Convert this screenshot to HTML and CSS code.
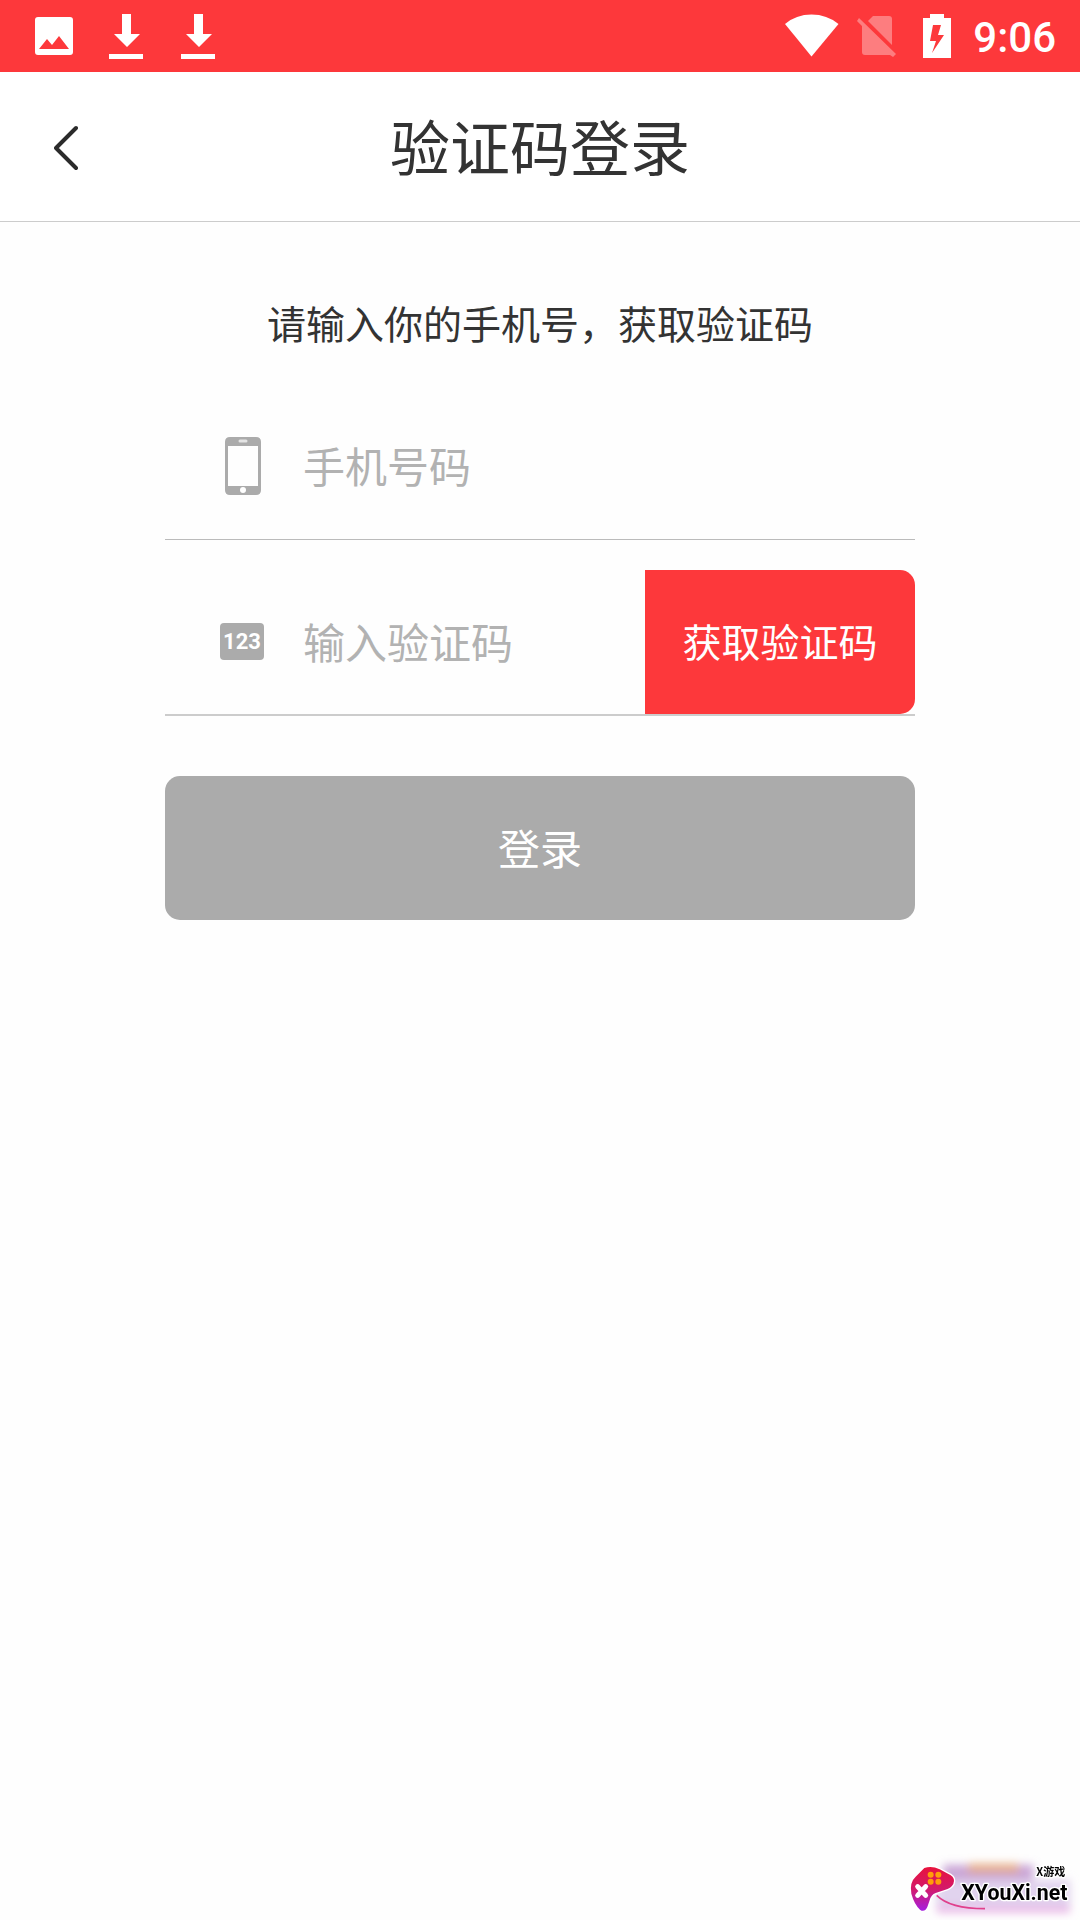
FILE: index.html
```html
<!DOCTYPE html>
<html lang="zh-CN">
<head>
    <meta charset="UTF-8">
    <meta name="viewport" content="width=device-width, initial-scale=1.0">
    <title>验证码登录</title>
    <link rel="stylesheet" href="styles.css">
</head>
<body>
    <div class="status-bar">
        <div class="status-left">
            <svg class="notice-icon" viewBox="0 0 48 72">
                <path fill="#fff" fill-rule="evenodd" d="M8 17h32a3 3 0 0 1 3 3v32a3 3 0 0 1-3 3H8a3 3 0 0 1-3-3V20a3 3 0 0 1 3-3zM9 49h30L29 36l-7 9-5-6z"/>
            </svg>
            <svg class="notice-icon" viewBox="0 0 48 72">
                <path fill="#fff" d="M20 14h9v20h9L25 47 12 34h8zM7 54h34v5H7z"/>
            </svg>
            <svg class="notice-icon" viewBox="0 0 48 72">
                <path fill="#fff" d="M20 14h9v20h9L25 47 12 34h8zM7 54h34v5H7z"/>
            </svg>
        </div>
        <div class="status-right">
            <svg class="system-icon" viewBox="0 0 62 72">
                <path fill="#fff" d="M29.500 56.500L3 24Q14 14.500 29.500 14.500T56.500 24z"/>
            </svg>
            <svg class="system-icon" viewBox="0 0 62 72">
                <g fill="#fff" opacity=".35">
                    <path d="M29 16h16q3 0 3 3v26L24 21z"/>
                    <path d="M15 18l37 36-3 3-3-2H21q-3 0-3-3V26l-5-5z"/>
                </g>
            </svg>
            <svg class="system-icon" viewBox="0 0 62 72">
                <path fill="#fff" fill-rule="evenodd" d="M24 14h14v4h7v40H17V18h7zM27 25l-3 16h6l-4 12 12-18h-6l3-10z"/>
            </svg>
            <span class="time">9:06</span>
        </div>
    </div>

    <header class="header">
        <button class="back" type="button" aria-label="返回">
            <svg width="24" height="46" viewBox="0 0 24 46">
                <path fill="none" stroke="#2b2b2b" stroke-width="4" stroke-linecap="round" stroke-linejoin="round" d="M22 3L2 23l20 20"/>
            </svg>
        </button>
        <h1 class="title">验证码登录</h1>
    </header>

    <main class="main">
        <form class="login-form">
            <p class="hint">请输入你的手机号，获取验证码</p>

            <div class="field">
                <label class="field-icon" for="phone" aria-label="手机号码">
                    <svg width="60" height="60" viewBox="0 0 60 60">
                        <path fill="#ababab" fill-rule="evenodd" d="M17 0h26q5 0 5 5v48q0 5-5 5H17q-5 0-5-5V5q0-5 5-5zM15 9v40h30V9z"/>
                        <path stroke="#e4e4e4" stroke-width="3" stroke-linecap="round" d="M27 4h6"/>
                        <circle cx="30" cy="53" r="3" fill="#fff"/>
                    </svg>
                </label>
                <input class="field-input" id="phone" type="tel" placeholder="手机号码">
            </div>

            <div class="field field-code">
                <label class="field-icon" for="code" aria-label="输入验证码">
                    <svg width="60" height="60" viewBox="0 0 60 60">
                        <rect x="7" y="11" width="44" height="37" rx="4" fill="#ababab"/>
                        <text class="digits" x="29" y="37" text-anchor="middle">123</text>
                    </svg>
                </label>
                <input class="field-input" id="code" type="text" placeholder="输入验证码">
                <button class="get-code" type="button">获取验证码</button>
            </div>

            <button class="submit" type="button">登录</button>
        </form>
    </main>

    <svg class="site-mark" width="190" height="70" viewBox="0 0 570 210">
        <defs>
            <filter id="soft" x="-30%" y="-60%" width="160%" height="220%">
                <feGaussianBlur stdDeviation="12"/>
            </filter>
            <linearGradient id="pad" x1="0" y1="0" x2="0" y2="1">
                <stop offset="0" stop-color="#e8123c"/>
                <stop offset=".5" stop-color="#d31a6a"/>
                <stop offset="1" stop-color="#a51fe0"/>
            </linearGradient>
        </defs>
        <g filter="url(#soft)">
            <path fill="#b98aca" opacity=".75" d="M160 44h270v50H160z"/>
            <path fill="#f0b070" opacity=".7" d="M235 40h150v28H235z"/>
            <path fill="#d9c8ea" opacity=".8" d="M140 90h400v80H140z"/>
            <path fill="#e39ade" opacity=".7" d="M140 168h400v20H140z"/>
        </g>
        <path fill="none" stroke="#e0408c" stroke-width="5" d="M140 136q40 40 145 40"/>
        <path fill="url(#pad)" stroke="#fff" stroke-width="8" paint-order="stroke" d="M103 54q22-8 46 4l32 17q16 10 9 27-7 13-26 18l-27 9q-14 5-18 22l-7 20q-9 18-22 8-17-16-26-48-6-34 13-51z"/>
        <g fill="#ff9d0a">
            <circle cx="122" cy="74" r="9"/>
            <circle cx="145" cy="74" r="9"/>
            <circle cx="122" cy="95" r="9"/>
            <circle cx="145" cy="95" r="9"/>
        </g>
        <path stroke="#fff" stroke-width="15" stroke-linecap="round" d="M83 110l24 26M107 110l-24 26"/>
        <text class="mark-small" x="439" y="78">X游戏</text>
        <text class="mark-name" x="214" y="150">XYouXi.net</text>
    </svg>
</body>
</html>
```

FILE: styles.css
```css
* {
    box-sizing: border-box;
}

body {
    margin: 0;
    min-height: 100vh;
    background-color: #fefefe;
    color: #333333;
    font-family: "Noto Sans CJK SC", sans-serif;
}

button,
input {
    font-family: inherit;
    border: none;
    padding: 0 0 4px;
}

button {
    cursor: pointer;
}

svg {
    display: block;
}

/* status bar */
.status-bar {
    display: flex;
    justify-content: space-between;
    height: 72px;
    padding: 0 24px 0 30px;
    background-color: #fd383b;
}

.status-left {
    display: flex;
    gap: 24px;
}

.status-right {
    display: flex;
    align-items: center;
}

.notice-icon {
    width: 48px;
    height: 72px;
}

.system-icon {
    width: 62px;
    height: 72px;
}

.time {
    margin-left: 5px;
    padding-top: 4px;
    font-family: Roboto, sans-serif;
    font-size: 42px;
    font-weight: 500;
    line-height: 60px;
    color: #ffffff;
}

/* header */
.header {
    display: grid;
    grid-template-columns: 1fr auto 1fr;
    align-items: center;
    height: 150px;
    border-bottom: 1px solid #cccccc;
    background-color: #ffffff;
}

.back {
    justify-self: start;
    padding: 32px 54px 30px;
    background: none;
}

.title {
    margin: 0;
    padding-bottom: 4px;
    font-size: 60px;
    font-weight: 400;
    line-height: 90px;
}

/* form */
.main {
    padding: 70px 30px;
}

.login-form {
    max-width: 750px;
    margin: 0 auto;
}

.hint {
    margin: 0 0 42px;
    font-size: 39px;
    line-height: 60px;
    text-align: center;
}

.field {
    display: flex;
    align-items: center;
    height: 146px;
    margin-bottom: 30px;
    padding-left: 48px;
    border-bottom: 1px solid #bbbbbb;
}

.field-code {
    margin-bottom: 60px;
    border-bottom: 2px solid #cccccc;
}

.field-icon {
    flex: none;
    margin-right: 30px;
}

.field-input {
    flex: 1;
    min-width: 0;
    height: 100%;
    outline: none;
    background: none;
    font-size: 42px;
    color: #333333;
}

.field-input::placeholder {
    color: #b2b2b2;
    opacity: 1;
}

.digits {
    font-family: Roboto, sans-serif;
    font-size: 22px;
    font-weight: 700;
    fill: #ffffff;
}

.get-code {
    flex: none;
    width: 270px;
    height: 144px;
    border-radius: 0 15px 15px 0;
    background-color: #fd383b;
    font-size: 39px;
    color: #ffffff;
}

.submit {
    width: 100%;
    height: 144px;
    border-radius: 15px;
    background-color: #ababab;
    font-size: 42px;
    color: #ffffff;
}

/* corner logo */
.site-mark {
    position: fixed;
    right: 0;
    bottom: 0;
}

.mark-name,
.mark-small {
    fill: #000000;
    stroke: #ffffff;
    stroke-width: 8px;
    stroke-linejoin: round;
    paint-order: stroke;
    font-weight: 700;
}

.mark-name {
    font-family: Roboto, sans-serif;
    font-size: 64px;
}

.mark-small {
    font-family: "Noto Sans CJK SC", sans-serif;
    font-size: 33px;
}
```
